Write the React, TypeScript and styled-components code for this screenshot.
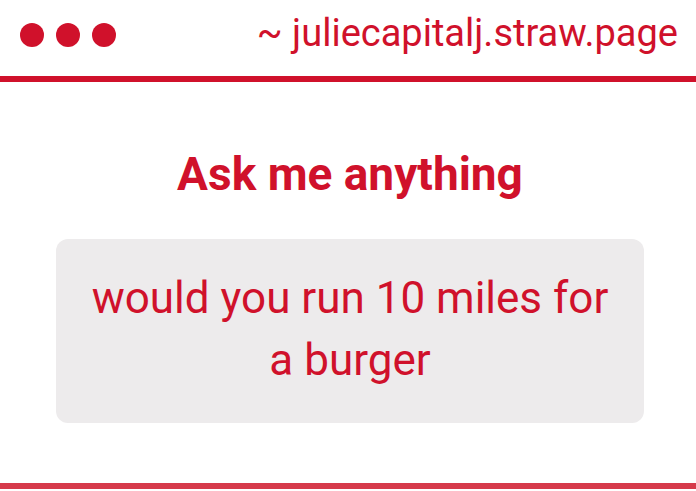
import React from 'react';
import styled, { createGlobalStyle } from 'styled-components';

const RED = '#d0112b';

const GlobalStyle = createGlobalStyle`
  html, body {
    margin: 0;
    padding: 0;
    background: #ffffff;
    font-family: Roboto, "Liberation Sans", sans-serif;
  }
`;

const Page = styled.div`
  width: 696px;
  height: 491px;
  display: flex;
  flex-direction: column;
  overflow: hidden;
`;

const Header = styled.header`
  height: 82px;
  flex-shrink: 0;
  box-sizing: border-box;
  display: flex;
  align-items: flex-start;
  justify-content: space-between;
  padding: 11px 18px 0 20px;
  border-bottom: 6px solid ${RED};
`;

const Dots = styled.div`
  display: flex;
  gap: 12px;
  margin-top: 12px;
`;

const Dot = styled.span`
  width: 24px;
  height: 24px;
  border-radius: 50%;
  background: ${RED};
`;

const Url = styled.div`
  color: ${RED};
  font-size: 38px;
  line-height: 44px;
`;

const Main = styled.main`
  flex: 1;
  display: flex;
  flex-direction: column;
  align-items: center;
  padding: 0 52px 0 56px;
`;

const Title = styled.h1`
  margin: 64px 0 0;
  color: ${RED};
  font-size: 46px;
  font-weight: 700;
  line-height: 56px;
`;

const Card = styled.div`
  margin-top: 37px;
  width: 100%;
  height: 184px;
  box-sizing: border-box;
  background: #edebec;
  border-radius: 12px;
  display: flex;
  align-items: center;
  justify-content: center;
  padding: 0 30px 4px;
  text-align: center;
  color: ${RED};
  font-size: 44px;
  line-height: 62px;
`;

const Footer = styled.footer`
  height: 6px;
  margin-bottom: 2px;
  flex-shrink: 0;
  background: #d63a4b;
`;

export default function App() {
  return (
    <Page>
      <GlobalStyle />
      <Header>
        <Dots>
          <Dot />
          <Dot />
          <Dot />
        </Dots>
        <Url>~ juliecapitalj.straw.page</Url>
      </Header>
      <Main>
        <Title>Ask me anything</Title>
        <Card>would you run 10 miles for a burger</Card>
      </Main>
      <Footer />
    </Page>
  );
}
